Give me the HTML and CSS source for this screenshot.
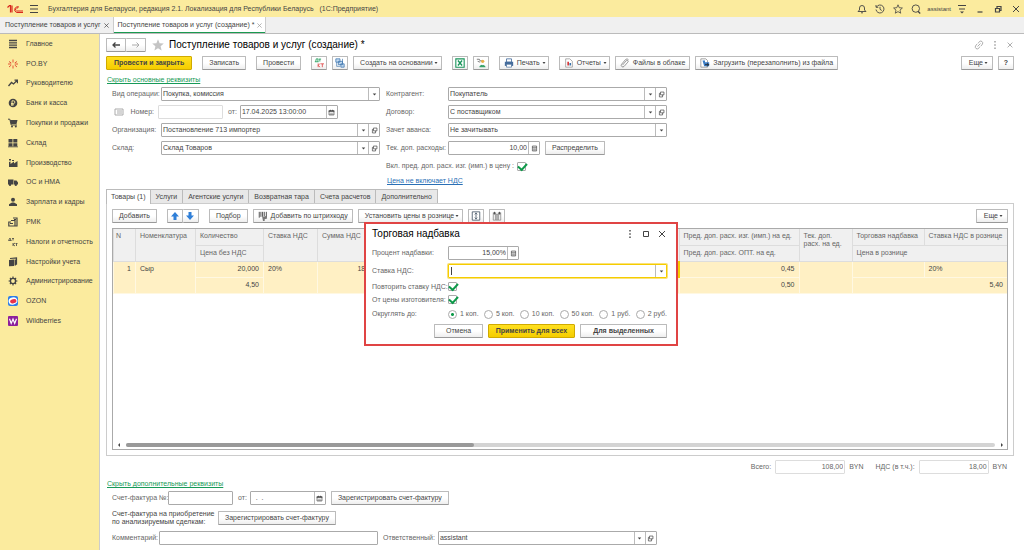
FILE: index.html
```html
<!DOCTYPE html>
<html lang="ru">
<head>
    <meta charset="UTF-8">
    <meta name="viewport" content="width=device-width, initial-scale=1.0">
    <title>Поступление товаров и услуг (создание)</title>
    <link rel="stylesheet" href="styles.css">
</head>
<body>
    <!-- Shared icons -->
    <svg class="sprite" aria-hidden="true">
        <symbol id="i-down" viewBox="0 0 10 10"><path d="M2.5 3.5h5L5 6.5z" fill="currentColor"/></symbol>
        <symbol id="i-open" viewBox="0 0 10 10"><path d="M3.5 1.500h5v4h-5zM3.500 3.500h-1.500v5h4.500v-3" fill="none" stroke="currentColor"/></symbol>
        <symbol id="i-cal" viewBox="0 0 10 10"><path d="M1.500 2.500h7v6h-7z" fill="none" stroke="currentColor"/><path d="M1 2h8v2H1zM3 1h1v2H3zM6 1h1v2H6z" fill="currentColor"/><path d="M3 6h4M3 7.500h4" stroke="currentColor" stroke-width=".6"/></symbol>
        <symbol id="i-calc" viewBox="0 0 10 10"><path d="M2 1.500h6v7H2z" fill="none" stroke="currentColor"/><path d="M2 3.500h6M3 5.500h4M3 7h4" stroke="currentColor" stroke-width=".8"/></symbol>
        <symbol id="i-dots" viewBox="0 0 10 10"><path d="M4.300 1h1.400v1.600H4.300zM4.300 4.200h1.400v1.600H4.300zM4.300 7.400h1.400V9H4.300z" fill="currentColor"/></symbol>
        <symbol id="i-close" viewBox="0 0 10 10"><path d="M2 2l6 6M8 2L2 8" stroke="currentColor" stroke-width="1"/></symbol>
    </svg>

    <header class="titlebar">
        <svg class="logo" viewBox="0 0 32 20" aria-label="1C"><path d="M1 7l4-4h2v14M10 17V3" fill="none" stroke="#d9271c" stroke-width="2.400"/><path d="M24 6a6 6 0 1 0-5 11h13M22 8a3 3 0 1 0-3 6h13" fill="none" stroke="#d9271c" stroke-width="2"/></svg>
        <button class="icon-btn" aria-label="Меню"><svg viewBox="0 0 10 10"><path d="M1 1.500h8M1 5h8M1 8.500h8" stroke="currentColor"/></svg></button>
        <span class="app-name">Бухгалтерия для Беларуси, редакция 2.1. Локализация для Республики Беларусь &nbsp; (1С:Предприятие)</span>
        <div class="title-tools">
            <button class="icon-btn" aria-label="Уведомления"><svg viewBox="0 0 10 10"><path d="M1 7.500h8L7.500 6V4a2.500 2.500 0 0 0-5 0v2zM4 8.800h2" fill="none" stroke="currentColor" stroke-width=".9"/></svg></button>
            <button class="icon-btn" aria-label="История"><svg viewBox="0 0 10 10"><path d="M1.500 3A4 4 0 1 1 1 5.500M1 1v2.300h2.300M5 2.800V5.300l1.800 1.200" fill="none" stroke="currentColor" stroke-width=".9"/></svg></button>
            <button class="icon-btn" aria-label="Избранное"><svg viewBox="0 0 10 10"><path d="M5 .8l1.200 2.900 3.200.3-2.400 2.100.7 3.100L5 7.600 2.300 9.200 3 6.100.6 4l3.200-.3z" fill="none" stroke="currentColor" stroke-width=".8"/></svg></button>
            <button class="icon-btn" aria-label="Поиск"><svg viewBox="0 0 10 10"><circle cx="4.800" cy="4.600" r="3.700" fill="none" stroke="currentColor" stroke-width=".9"/><path d="M7 7.300l2.200 2.200" stroke="currentColor" stroke-width="1.300"/></svg></button>
            <span class="user">assistant</span>
            <button class="icon-btn" aria-label="Настройки"><svg viewBox="0 0 10 10"><path d="M1 1.500h8M2 5h6" stroke="currentColor"/><path d="M3 7.500h4l-2 2z" fill="currentColor"/></svg></button>
            <button class="icon-btn win" aria-label="Свернуть"><svg viewBox="0 0 10 10"><path d="M2.500 8h5" stroke="currentColor" stroke-width="1.200"/></svg></button>
            <button class="icon-btn win" aria-label="Восстановить"><svg viewBox="0 0 10 10"><path d="M4 4V2.500h4v4H6.500M2.500 4.500h4v3.500h-4z" fill="none" stroke="currentColor" stroke-width="1.200"/></svg></button>
            <button class="icon-btn win" aria-label="Закрыть"><svg><use href="#i-close"/></svg></button>
        </div>
    </header>

    <nav class="tabbar">
        <div class="page-tab"><a href="#">Поступление товаров и услуг</a><button class="tab-close" aria-label="Закрыть вкладку"><svg><use href="#i-close"/></svg></button></div>
        <div class="page-tab active"><a href="#">Поступление товаров и услуг (создание) *</a><button class="tab-close" aria-label="Закрыть вкладку"><svg><use href="#i-close"/></svg></button></div>
    </nav>

    <div class="layout">
        <nav class="sidebar">
            <div class="sections">
                <a href="#"><svg viewBox="0 0 10 10"><path d="M1 1.500h8M1 3.800h8M1 6.200h8M1 8.500h8" stroke="currentColor" stroke-width="1.300"/></svg>Главное</a>
                <a href="#"><svg viewBox="0 0 10 10" class="red"><path d="M5 .5v3M5 6.500v3M1 2.500l2.300 1.500M9 2.500L6.700 4M1 8l2.300-2M9 8L6.700 6M0 5h3M7 5h3" stroke="currentColor" stroke-width=".9"/></svg>PO.BY</a>
                <a href="#"><svg viewBox="0 0 10 10"><path d="M.5 8l3-3.500 2 1.500L9 2.500M6.500 2.200h3v3" fill="none" stroke="currentColor" stroke-width="1.300"/></svg>Руководителю</a>
                <a href="#"><svg viewBox="0 0 10 10"><circle cx="5" cy="5" r="4.300" fill="currentColor"/><path d="M4 8V2.800h1.500a1.300 1.300 0 0 1 0 2.700H3M3 6.800h3" fill="none" stroke="#fbeb9e" stroke-width=".9"/></svg>Банк и касса</a>
                <a href="#"><svg viewBox="0 0 10 10"><path d="M0 1.200h1.800L3.200 7H9" fill="none" stroke="currentColor"/><path d="M2 2h7.500L8.500 6H3z" fill="currentColor"/><circle cx="4" cy="8.500" r="1" fill="currentColor"/><circle cx="7.800" cy="8.500" r="1" fill="currentColor"/></svg>Покупки и продажи</a>
                <a href="#"><svg viewBox="0 0 10 10"><path d="M.5 1h4v3.400h-4zM5.300 1h4v3.400h-4zM.5 5.200h4v3h-4zM5.300 5.200h4v3h-4zM0 8.500h10v.8H0z" fill="currentColor"/></svg>Склад</a>
                <a href="#"><svg viewBox="0 0 10 10"><path d="M1 9V4l1.500-.5V6L6 3.500v2L9.500 3v6zM1 1h2v1.500H1zM4 2h2v1H4z" fill="currentColor"/></svg>Производство</a>
                <a href="#"><svg viewBox="0 0 10 10"><path d="M0 2.500h5.500v5H0zM6 3.500h2.500L10 5.500v2H6z" fill="currentColor"/><circle cx="2" cy="7.800" r="1.200" fill="currentColor"/><circle cx="7.800" cy="7.800" r="1.200" fill="currentColor"/></svg>ОС и НМА</a>
                <a href="#"><svg viewBox="0 0 10 10"><circle cx="5" cy="2.700" r="2" fill="currentColor"/><path d="M1 9V7.200L4 5.500h2l3 1.700V9z" fill="currentColor"/></svg>Зарплата и кадры</a>
                <a href="#"><svg viewBox="0 0 10 10"><path d="M3 3.500h4v5.500H.8V5H3M5 1h4v8H7M6 2.500h2M2 6.500h3" fill="none" stroke="currentColor" stroke-width="1.200"/></svg>РМК</a>
                <a href="#"><svg viewBox="0 0 10 10"><path d="M.5 3.500L2 1l1 2.500M.5 3.500h3M4 1.500h2M5 1.500v2M5 6v3M5 7.500L7 6M5 7.500L7 9M7.500 6.500h2M8.500 6.500V9" fill="none" stroke="currentColor" stroke-width=".8"/></svg>Налоги и отчетность</a>
                <a href="#"><svg viewBox="0 0 10 10"><path d="M1 3l5-.5v6.500L1 9.300z" fill="currentColor"/><path d="M2 1.500l6.500-.7v7" fill="none" stroke="currentColor" stroke-width="1.200"/><path d="M6.500 2.500h1.500v6H6.500z" fill="currentColor"/></svg>Настройки учета</a>
                <a href="#"><svg viewBox="0 0 10 10"><circle cx="5" cy="5" r="2.600" fill="none" stroke="currentColor" stroke-width="1.400"/><path d="M5 .6v1.700M5 7.700v1.700M.6 5h1.700M7.700 5h1.700M1.900 1.900L3 3M7 7l1.100 1.100M8.100 1.900L7 3M3 7L1.900 8.100" stroke="currentColor" stroke-width="1.200"/></svg>Администрирование</a>
                <a href="#"><svg viewBox="0 0 10 10"><rect width="10" height="10" rx="2" fill="#2b7de9"/><ellipse cx="5" cy="5" rx="4.400" ry="3.500" fill="#fff" transform="rotate(-15 5 5)"/><ellipse cx="5.200" cy="5.300" rx="3.200" ry="2" fill="#e8324a" transform="rotate(-15 5 5)"/></svg>OZON</a>
                <a href="#"><svg viewBox="0 0 10 10"><rect width="10" height="10" rx="1" fill="#8d1f9c"/><path d="M1.500 2.800l1.700 4.600L5 3l1.700 4.400L8.500 2.800" fill="none" stroke="#fff" stroke-width="1.200"/></svg>Wildberries</a>
            </div>
        </nav>

        <main class="content">
            <div class="doc-head">
                <div class="btn-pair">
                    <button class="btn" aria-label="Назад"><svg viewBox="0 0 10 10"><path d="M9 5H2M4.500 2.500L2 5l2.500 2.500" fill="none" stroke="currentColor" stroke-width="1.300"/></svg></button>
                    <button class="btn pale" aria-label="Вперед"><svg viewBox="0 0 10 10"><path d="M1 5h7M5.500 2.500L8 5 5.500 7.500" fill="none" stroke="currentColor"/></svg></button>
                </div>
                <svg class="star" viewBox="0 0 12 12"><path d="M6 .3l1.600 4 4.200.3-3.200 2.700 1 4.200L6 9.200l-3.600 2.300 1-4.200L.2 4.600l4.200-.3z" fill="#c4c4c4"/></svg>
                <h1>Поступление товаров и услуг (создание) *</h1>
                <div class="doc-tools">
                    <button class="icon-btn" aria-label="Ссылка"><svg viewBox="0 0 10 10"><path d="M4 3.500l1.500-2a2 2 0 0 1 3 2.500L7 6M6 6.500l-1.500 2a2 2 0 0 1-3-2.500L3 4M3.500 6.500l3-3" fill="none" stroke="currentColor" stroke-width=".8"/></svg></button>
                    <button class="icon-btn" aria-label="Еще"><svg><use href="#i-dots"/></svg></button>
                    <button class="icon-btn small" aria-label="Закрыть"><svg><use href="#i-close"/></svg></button>
                </div>
            </div>

            <div class="toolbar">
                <button class="btn primary wide">Провести и закрыть</button>
                <button class="btn">Записать</button>
                <button class="btn">Провести</button>
                <div class="group">
                    <button class="btn sq" aria-label="Движения документа"><svg viewBox="0 0 12 12"><path d="M1 4.500h4.500M2 4.500L2.700 1h2v3.500M5.500 1.300h3M7 1.300v3" fill="none" stroke="#1d9a58"/><path d="M5 6.500v4.500M5 8.800l2.300-2.300M5 8.800L7.300 11M8 7h4M10 7v4" fill="none" stroke="#e04848"/></svg></button>
                    <button class="btn sq" aria-label="Структура подчиненности"><svg viewBox="0 0 12 12"><path d="M1 1h5v4H1zM4 4h5v4H4zM7 7h4v4H7z" fill="#c4dcf2" stroke="#3b74ad" stroke-width=".9"/><path d="M2 5v5h4M9 1v5" fill="none" stroke="#3b74ad" stroke-width=".8"/></svg></button>
                    <button class="btn">Создать на основании<svg class="caret"><use href="#i-down"/></svg></button>
                </div>
                <div class="group">
                    <button class="btn sq" aria-label="Excel"><svg viewBox="0 0 12 12"><path d="M1 1h10v10H1z" fill="#fff" stroke="#18945a" stroke-width="1.300"/><path d="M3.500 3l5 6M8.500 3l-5 6" stroke="#18945a" stroke-width="1.600"/></svg></button>
                    <button class="btn sq" aria-label="Загрузка"><svg viewBox="0 0 12 12"><path d="M1 1.500h3l1 2h3M2 4l3 1" fill="none" stroke="#666"/><circle cx="8" cy="4" r="2" fill="#e8b04a"/><path d="M4 11c0-4 7-4 7.500 0z" fill="#38a169"/><path d="M7 7l1 2 1-2z" fill="#fff"/></svg></button>
                </div>
                <button class="btn icon-text"><svg viewBox="0 0 12 12"><path d="M3 1h6v4H3z" fill="#fff" stroke="#456c9c"/><path d="M1 4.500h10v5H1z" fill="#456c9c"/><path d="M3 7.500h6V11H3z" fill="#fff" stroke="#456c9c" stroke-width=".8"/></svg>Печать<svg class="caret"><use href="#i-down"/></svg></button>
                <div class="group">
                    <button class="btn icon-text"><svg viewBox="0 0 12 12"><path d="M2 1h5l3 3v7H2z" fill="#fff" stroke="#888" stroke-width=".8"/><path d="M4 4.500h2V9H4z" fill="#d93a3a"/><path d="M6.500 6h2v3h-2z" fill="#3b74ad"/></svg>Отчеты<svg class="caret"><use href="#i-down"/></svg></button>
                    <button class="btn icon-text"><svg viewBox="0 0 12 12"><path d="M3 8.500l4.500-5.200a1.200 1.200 0 0 1 2 1.600l-4.700 5.300a2 2 0 0 1-3-2.600L6.500 2a2.500 2.500 0 0 1 3.800.2" fill="none" stroke="#777" stroke-width=".9"/></svg>Файлы в облаке</button>
                    <button class="btn icon-text"><svg viewBox="0 0 12 12"><path d="M1 1h6l2 2v8H1z" fill="#fff" stroke="#777" stroke-width=".8"/><path d="M3 3h3v2h5v5H5z" fill="#3b7cc4"/><path d="M6 8h4M8.500 6.500L10.500 8 8.500 10" fill="none" stroke="#222"/></svg>Загрузить (перезаполнить) из файла</button>
                </div>
                <div class="group right">
                    <button class="btn wide">Еще<svg class="caret"><use href="#i-down"/></svg></button>
                    <button class="btn sq"><b>?</b></button>
                </div>
            </div>

            <a href="#" class="link green">Скрыть основные реквизиты</a>

            <form class="details">
                <div class="col">
                    <div class="row">
                        <label for="operation">Вид операции:</label>
                        <div class="field grow"><select id="operation"><option>Покупка, комиссия</option></select><span class="cell"><svg><use href="#i-down"/></svg></span></div>
                    </div>
                    <div class="row">
                        <label for="number" class="with-icon"><svg viewBox="0 0 10 10"><path d="M1 2h8v6H1zM3 4h5M3 6h5" fill="none" stroke="#aaa"/></svg>Номер:</label>
                        <div class="field number disabled"><input type="text" id="number"></div>
                        <label for="date" class="inline">от:</label>
                        <div class="field date"><input type="text" id="date" value="17.04.2025 13:00:00"><button type="button" class="cell" aria-label="Календарь"><svg><use href="#i-cal"/></svg></button></div>
                    </div>
                    <div class="row">
                        <label for="org">Организация:</label>
                        <div class="field grow"><select id="org"><option>Постановление 713 импортер</option></select><span class="cell"><svg><use href="#i-down"/></svg></span><button type="button" class="cell" aria-label="Открыть"><svg><use href="#i-open"/></svg></button></div>
                    </div>
                    <div class="row">
                        <label for="store">Склад:</label>
                        <div class="field grow"><select id="store"><option>Склад Товаров</option></select><span class="cell"><svg><use href="#i-down"/></svg></span><button type="button" class="cell" aria-label="Открыть"><svg><use href="#i-open"/></svg></button></div>
                    </div>
                </div>
                <div class="col second">
                    <div class="row">
                        <label for="partner">Контрагент:</label>
                        <div class="field grow"><select id="partner"><option>Покупатель</option></select><span class="cell"><svg><use href="#i-down"/></svg></span><button type="button" class="cell" aria-label="Открыть"><svg><use href="#i-open"/></svg></button></div>
                    </div>
                    <div class="row">
                        <label for="contract">Договор:</label>
                        <div class="field grow"><select id="contract"><option>С поставщиком</option></select><span class="cell"><svg><use href="#i-down"/></svg></span><button type="button" class="cell" aria-label="Открыть"><svg><use href="#i-open"/></svg></button></div>
                    </div>
                    <div class="row">
                        <label for="advance">Зачет аванса:</label>
                        <div class="field grow"><select id="advance"><option>Не зачитывать</option></select><span class="cell"><svg><use href="#i-down"/></svg></span></div>
                    </div>
                    <div class="row">
                        <label for="costs">Тек. доп. расходы:</label>
                        <div class="field costs"><input type="text" id="costs" class="num" value="10,00"><button type="button" class="cell" aria-label="Калькулятор"><svg><use href="#i-calc"/></svg></button></div>
                        <button type="button" class="btn">Распределить</button>
                    </div>
                    <div class="row">
                        <label for="include" class="inline first">Вкл. пред. доп. расх. изг. (имп.) в цену :</label>
                        <input type="checkbox" id="include" checked>
                    </div>
                    <a href="#" class="link blue">Цена не включает НДС</a>
                </div>
            </form>

            <div class="tabs">
                <button class="active">Товары (1)</button>
                <button>Услуги</button>
                <button>Агентские услуги</button>
                <button>Возвратная тара</button>
                <button>Счета расчетов</button>
                <button>Дополнительно</button>
            </div>

            <section class="panel">
                <div class="toolbar inner">
                    <button class="btn">Добавить</button>
                    <div class="btn-pair">
                        <button class="btn sq" aria-label="Вверх"><svg viewBox="0 0 10 10"><path d="M5 1l4 4.500H6.500V9h-3V5.500H1z" fill="#2f7fd8"/></svg></button>
                        <button class="btn sq" aria-label="Вниз"><svg viewBox="0 0 10 10"><path d="M5 9L1 4.500h2.500V1h3v3.500H9z" fill="#2f7fd8"/></svg></button>
                    </div>
                    <div class="group">
                        <button class="btn">Подбор</button>
                        <button class="btn icon-text"><svg viewBox="0 0 12 12"><path d="M1.500 1v7M3.500 1v6M5.500 1v6M7.500 1v5M10 1v7" stroke="#555" stroke-width="1.200"/><path d="M5 7l5-1 1 3-3 1v2H6z" fill="#777"/></svg>Добавить по штрихкоду</button>
                        <button class="btn">Установить цены в рознице<svg class="caret"><use href="#i-down"/></svg></button>
                        <button class="btn sq" aria-label="Развернуть"><svg viewBox="0 0 12 12"><path d="M1.500 1h9v10h-9z" fill="#fff" stroke="#456" /><path d="M6 2v8M4.500 4L6 2.500 7.500 4M4.500 8L6 9.500 7.500 8" fill="none" stroke="#456"/></svg></button>
                        <button class="btn sq" aria-label="Колонки"><svg viewBox="0 0 12 12"><path d="M1.500 3.500h3V11h-3zM7.500 3.500h3V11h-3zM5 4h2v7H5z" fill="#eee" stroke="#777" stroke-width=".8"/><path d="M1 2.500h4M7 2.500h4M3 1v3M9 1v3" stroke="#555" stroke-width="1.200"/></svg></button>
                    </div>
                    <button class="btn wide right">Еще<svg class="caret"><use href="#i-down"/></svg></button>
                </div>

                <div class="grid-box">
                    <table>
                        <colgroup>
                            <col class="c-n"><col class="c-name"><col class="c-qty"><col class="c-vat"><col class="c-sum"><col>
                            <col class="c-prev"><col class="c-cur"><col class="c-markup"><col class="c-retail">
                        </colgroup>
                        <thead>
                            <tr>
                                <th rowspan="2">N</th>
                                <th rowspan="2">Номенклатура</th>
                                <th>Количество</th>
                                <th rowspan="2">Ставка НДС</th>
                                <th rowspan="2">Сумма НДС</th>
                                <th rowspan="2"></th>
                                <th>Пред. доп. расх. изг. (имп.) на ед.</th>
                                <th rowspan="2">Тек. доп. расх. на ед.</th>
                                <th>Торговая надбавка</th>
                                <th>Ставка НДС в рознице</th>
                            </tr>
                            <tr>
                                <th>Цена без НДС</th>
                                <th>Пред. доп. расх. ОПТ. на ед.</th>
                                <th colspan="2">Цена в рознице</th>
                            </tr>
                        </thead>
                        <tbody>
                            <tr>
                                <td rowspan="2" class="num">1</td>
                                <td rowspan="2">Сыр</td>
                                <td class="num">20,000</td>
                                <td rowspan="2">20%</td>
                                <td rowspan="2" class="num">18,00</td>
                                <td class="current"></td>
                                <td class="num">0,45</td>
                                <td rowspan="2"></td>
                                <td></td>
                                <td>20%</td>
                            </tr>
                            <tr>
                                <td class="num">4,50</td>
                                <td></td>
                                <td class="num">0,50</td>
                                <td colspan="2" class="num">5,40</td>
                            </tr>
                        </tbody>
                    </table>
                    <div class="scroll">
                        <svg viewBox="0 0 6 6"><path d="M4 1v4L2 3z" fill="#444"/></svg>
                        <div class="track"><div class="thumb"></div></div>
                        <svg viewBox="0 0 6 6"><path d="M2 1v4l2-2z" fill="#444"/></svg>
                    </div>
                </div>

                <div class="dialog" role="dialog" aria-labelledby="dialogTitle">
                    <div class="dialog-head">
                        <h2 id="dialogTitle">Торговая надбавка</h2>
                        <button class="icon-btn" aria-label="Еще"><svg><use href="#i-dots"/></svg></button>
                        <button class="icon-btn" aria-label="Развернуть"><svg viewBox="0 0 10 10"><path d="M2.500 2.500h5v5h-5z" fill="none" stroke="currentColor"/></svg></button>
                        <button class="icon-btn" aria-label="Закрыть"><svg><use href="#i-close"/></svg></button>
                    </div>
                    <div class="row">
                        <label for="percent">Процент надбавки:</label>
                        <div class="field percent"><input type="text" id="percent" class="num" value="15,00%"><button class="cell" aria-label="Калькулятор"><svg><use href="#i-calc"/></svg></button></div>
                    </div>
                    <div class="row">
                        <label for="vat">Ставка НДС:</label>
                        <div class="field grow focused"><input type="text" id="vat"><button class="cell" aria-label="Выбрать"><svg><use href="#i-down"/></svg></button></div>
                    </div>
                    <div class="row short">
                        <label for="repeat">Повторить ставку НДС:</label>
                        <input type="checkbox" id="repeat" checked>
                    </div>
                    <div class="row short">
                        <label for="maker">От цены изготовителя:</label>
                        <input type="checkbox" id="maker" checked>
                    </div>
                    <div class="row rounding">
                        <span class="label">Округлять до:</span>
                        <div class="radios">
                            <label><input type="radio" name="round" checked>1 коп.</label>
                            <label><input type="radio" name="round">5 коп.</label>
                            <label><input type="radio" name="round">10 коп.</label>
                            <label><input type="radio" name="round">50 коп.</label>
                            <label><input type="radio" name="round">1 руб.</label>
                            <label><input type="radio" name="round">2 руб.</label>
                        </div>
                    </div>
                    <div class="dialog-actions">
                        <button class="btn">Отмена</button>
                        <button class="btn primary">Применить для всех</button>
                        <button class="btn bold">Для выделенных</button>
                    </div>
                </div>
            </section>

            <div class="totals">
                <label for="total">Всего:</label>
                <div class="field disabled"><input type="text" id="total" class="num" value="108,00"></div>
                <span>BYN</span>
                <label for="totalVat" class="next">НДС (в т.ч.):</label>
                <div class="field disabled"><input type="text" id="totalVat" class="num" value="18,00"></div>
                <span>BYN</span>
            </div>

            <a href="#" class="link green">Скрыть дополнительные реквизиты</a>

            <form class="extra">
                <div class="row">
                    <label for="invoice">Счет-фактура №:</label>
                    <div class="field number"><input type="text" id="invoice"></div>
                    <label for="invoiceDate" class="inline">от:</label>
                    <div class="field invoice-date"><input type="text" id="invoiceDate" value="  .  ."><button type="button" class="cell" aria-label="Календарь"><svg><use href="#i-cal"/></svg></button></div>
                    <button type="button" class="btn">Зарегистрировать счет-фактуру</button>
                </div>
                <div class="row">
                    <span class="label two-line">Счет-фактура на приобретение по анализируемым сделкам:</span>
                    <button type="button" class="btn">Зарегистрировать счет-фактуру</button>
                </div>
                <div class="row">
                    <label for="comment" class="comment">Комментарий:</label>
                    <div class="field long"><input type="text" id="comment"></div>
                    <label for="owner" class="inline">Ответственный:</label>
                    <div class="field long"><select id="owner"><option>assistant</option></select><span class="cell"><svg><use href="#i-down"/></svg></span><button type="button" class="cell" aria-label="Открыть"><svg><use href="#i-open"/></svg></button></div>
                </div>
            </form>
        </main>
    </div>
</body>
</html>
```

FILE: styles.css
```css
* {
    box-sizing: border-box;
}
body {
    margin: 0;
    min-height: 100vh;
    display: flex;
    flex-direction: column;
    font-family: "Liberation Sans", Arial, sans-serif;
    font-size: 7px;
    line-height: 8px;
    color: #444;
    background: #fff;
}
button, input, select {
    font: inherit;
    color: inherit;
    margin: 0;
}
button {
    cursor: pointer;
}
svg {
    display: block;
    width: 10px;
    height: 10px;
    flex: none;
}
.sprite {
    position: absolute;
    width: 0;
    height: 0;
}
.icon-btn {
    border: 0;
    padding: 0;
    background: none;
}

/* Title bar */
.titlebar {
    display: flex;
    align-items: center;
    height: 17px;
    padding: 0 3px 0 7px;
    background: #fbeb9e;
}
.logo {
    width: 16px;
    height: 10px;
    margin-right: 6px;
}
.titlebar .app-name {
    margin-left: 9px;
}
.title-tools {
    display: flex;
    align-items: center;
    gap: 8px;
    margin-left: auto;
}
.title-tools .user {
    font-size: 6px;
    margin: 0 -2px;
}

/* Open pages */
.tabbar {
    display: flex;
    height: 17px;
    background: #f0f0f0;
    border-bottom: 1px solid #bbb;
}
.page-tab {
    display: flex;
    align-items: center;
    gap: 2px;
    padding: 0 3px 0 5px;
    border-right: 1px solid #ccc;
}
.page-tab a {
    color: inherit;
    text-decoration: none;
}
.page-tab.active {
    background: #fff;
    box-shadow: inset 0 -1px #1a9a50;
    padding: 0 2px 0 4px;
}
.tab-close {
    border: 0;
    padding: 0;
    background: none;
}
.tab-close svg {
    width: 7px;
    height: 7px;
}
.active .tab-close {
    color: #999;
}

.layout {
    display: flex;
    flex: 1;
}

/* Sections */
.sidebar {
    width: 100px;
    flex: none;
    background: #fbeb9e;
    border-right: 1px solid #ccc;
}
.sections {
    display: grid;
    grid-auto-rows: 1fr;
    min-height: 54vh;
}
.sidebar a {
    display: flex;
    align-items: center;
    gap: 8px;
    padding-left: 8px;
    color: #444;
    text-decoration: none;
}
.sidebar .red {
    color: #e0452c;
}

/* Document */
.content {
    flex: 1;
    min-width: 0;
    display: flex;
    flex-direction: column;
    padding: 4px 10px 5px 6px;
}
.doc-head {
    display: flex;
    align-items: center;
    height: 14px;
}
.doc-head h1, .dialog h2 {
    font-size: 10px;
    line-height: 12px;
    font-weight: normal;
    color: #000;
    margin: 0;
}
.star {
    width: 12px;
    height: 12px;
    margin: 0 5px 0 6px;
}
.doc-tools {
    display: flex;
    align-items: center;
    gap: 6px;
    margin-left: auto;
    color: #999;
}
.small svg {
    width: 8px;
    height: 8px;
}
.btn {
    display: flex;
    align-items: center;
    justify-content: center;
    gap: 3px;
    height: 14px;
    padding: 0 6px;
    border: 1px solid #bbb;
    border-bottom-color: #999;
    border-radius: 1px;
    background: linear-gradient(#fff 50%, #eee);
    white-space: nowrap;
}
.btn.wide {
    padding: 0 7px;
}
.btn.sq {
    width: 16px;
    padding: 0;
}
.btn.primary {
    font-weight: bold;
    background: linear-gradient(#ffe01f, #f5cd00);
    border-color: #d0aa00;
}
.btn.bold {
    font-weight: bold;
}
.btn.icon-text {
    padding: 0 4px;
}
.btn .caret {
    width: 6px;
    height: 6px;
    margin: 0 -4px 0 -3px;
}
.btn.icon-text .caret {
    margin: 0 -3px 0 -2px;
}
.btn.pale {
    color: #aaa;
}
.btn-pair {
    display: flex;
}
.btn-pair .btn + .btn {
    border-left: 0;
}
.doc-head .btn-pair .btn {
    width: 20px;
    padding: 0;
}
.toolbar {
    display: flex;
    gap: 10px;
    margin-top: 4px;
}
.group {
    display: flex;
    gap: 5px;
}
.right {
    margin-left: auto;
}
.link {
    align-self: flex-start;
    text-decoration: underline;
}
.green {
    color: #179a58;
}
.blue {
    color: #2a6fb5;
    margin-left: 1px;
}
.content > .green {
    margin: 6px 0 3px 1px;
}

/* Form fields */
.details {
    display: flex;
    gap: 6px;
    padding-left: 6px;
}
.col {
    display: flex;
    flex-direction: column;
    gap: 4px;
    width: 268px;
}
.col.second {
    width: 281px;
}
.row {
    display: flex;
    align-items: center;
    min-height: 14px;
}
.row label {
    width: 49px;
    flex: none;
    color: #666;
    white-space: nowrap;
}
.second .row label {
    width: 62px;
}
.row .inline, .second .row .inline {
    width: auto;
    margin: 0 3px 0 5px;
}
.second .row .first {
    margin-left: 0;
}
.row .with-icon {
    display: flex;
    align-items: center;
    justify-content: space-between;
    padding: 0 4px 0 2px;
    width: 46px;
}
.field {
    display: flex;
    height: 14px;
    border: 1px solid #aaa;
    border-radius: 1px;
    background: #fff;
}
.field.disabled {
    border-color: #ddd;
}
.field input, .field select {
    flex: 1;
    min-width: 0;
    width: 100%;
    border: 0;
    padding: 0 1px;
    background: none;
    outline: none;
    appearance: none;
}
.cell {
    display: flex;
    align-items: center;
    justify-content: center;
    width: 11px;
    flex: none;
    padding: 0;
    border: 0;
    border-left: 1px solid #bbb;
    background: none;
}
.cell svg {
    width: 7px;
    height: 7px;
}
.num, .field .num {
    text-align: right;
}
.grow {
    flex: 1;
}
.number {
    width: 65px;
}
.date {
    width: 98px;
}
.costs {
    width: 92px;
    margin-right: 5px;
}
input[type="checkbox"] {
    appearance: none;
    width: 9px;
    height: 9px;
    border: 1px solid #aaa;
    border-radius: 1px;
    background: #fff;
    display: grid;
    place-items: center;
}
input[type="checkbox"]:checked::before {
    content: "";
    width: 7px;
    height: 4px;
    margin-bottom: 3px;
    border: solid #0e9a4a;
    border-width: 0 0 2px 2px;
    transform: rotate(-48deg);
}
input[type="radio"] {
    appearance: none;
    width: 9px;
    height: 9px;
    border: 1px solid #aaa;
    border-radius: 50%;
    background: #fff;
}
input[type="radio"]:checked {
    background: radial-gradient(circle, #0e9a4a 1px, #fff 2px);
}

/* Tabs with the goods table */
.tabs {
    display: flex;
    margin-top: 4px;
}
.tabs button {
    height: 14px;
    padding: 0 5px;
    border: 1px solid #bbb;
    border-width: 1px 1px 0 0;
    background: #e8e8e8;
    white-space: nowrap;
}
.tabs .active {
    position: relative;
    z-index: 1;
    height: 15px;
    margin-bottom: -1px;
    padding: 0 4px;
    border-left-width: 1px;
    background: #fff;
}
.panel {
    position: relative;
    flex: 1;
    display: flex;
    flex-direction: column;
    gap: 5px;
    padding: 5px;
    border: 1px solid #ccc;
}
.toolbar.inner {
    margin-top: 0;
}
.grid-box {
    flex: 1;
    display: flex;
    flex-direction: column;
    justify-content: space-between;
    border: 1px solid #aaa;
}
table {
    width: 100%;
    table-layout: fixed;
    border-collapse: collapse;
}
th, td {
    height: 16px;
    padding: 3px 4px;
    font-weight: normal;
    text-align: left;
    vertical-align: top;
}
th {
    color: #666;
    background: #f0f0f0;
    border: 1px solid #ddd;
    border-width: 0 0 1px 1px;
}
td {
    background: #fff0c4;
    border: 1px solid #fff8e2;
    border-width: 0 0 1px 1px;
}
th:first-child, td:first-child {
    padding-left: 2px;
}
tr:nth-child(2) th:first-child {
    padding-left: 4px;
}
td.current {
    border-right: 2px solid #f5cd00;
}
.c-n {
    width: 22px;
}
.c-name {
    width: 60px;
}
.c-qty {
    width: 68px;
}
.c-vat {
    width: 54px;
}
.c-sum {
    width: 62px;
}
.c-prev {
    width: 120px;
}
.c-cur {
    width: 53px;
}
.c-markup {
    width: 72px;
}
.c-retail {
    width: 83px;
}
.scroll {
    display: flex;
    align-items: center;
    gap: 4px;
    padding: 0 2px 1px 3px;
}
.scroll svg {
    width: 6px;
    height: 6px;
}
.track {
    flex: 1;
    height: 4px;
    border-radius: 2px;
    background: #d4d4d4;
}
.thumb {
    width: 40%;
    height: 4px;
    border-radius: 2px;
    background: #999;
}

/* Markup dialog */
.dialog {
    position: absolute;
    top: 18px;
    left: 257px;
    width: 314px;
    padding: 3px 9px 6px 6px;
    border: 2px solid #e04444;
    background: #fff;
    display: flex;
    flex-direction: column;
    gap: 4px;
}
.dialog-head {
    display: flex;
    align-items: center;
    gap: 6px;
    height: 14px;
    margin-bottom: 1px;
}
.dialog-head h2 {
    flex: 1;
}
.dialog .row label, .dialog .label {
    width: 76px;
    flex: none;
    color: #666;
}
.dialog .row.short {
    min-height: 9px;
}
.dialog .row.rounding {
    min-height: 12px;
}
.percent {
    width: 71px;
}
.focused {
    position: relative;
    border: 1px solid #f5cd00;
    box-shadow: 0 0 0 1px #fbe27a;
}
/* text cursor */
.focused::before {
    content: "";
    position: absolute;
    left: 2px;
    top: 2px;
    bottom: 2px;
    width: 1px;
    background: #444;
}
.radios {
    flex: 1;
    display: flex;
    justify-content: space-between;
}
.dialog .radios label {
    display: flex;
    align-items: center;
    gap: 3px;
    width: auto;
}
.dialog-actions {
    display: flex;
    justify-content: flex-end;
    gap: 5px;
}
.dialog-actions .btn {
    width: 87px;
}
.dialog-actions .btn:first-child {
    width: 49px;
}

/* Totals and invoice */
.totals {
    display: flex;
    align-items: center;
    justify-content: flex-end;
    gap: 4px;
    margin-top: 4px;
    padding-right: 7px;
    color: #666;
}
.totals .field {
    width: 70px;
}
.totals .next {
    margin-left: 8px;
}
.extra {
    display: flex;
    flex-direction: column;
    gap: 5px;
    padding-left: 6px;
}
.extra .row label:first-child {
    width: 56px;
}
.extra .row .comment:first-child {
    width: 47px;
}
.invoice-date {
    width: 76px;
    margin-right: 5px;
}
.invoice-date input {
    white-space: pre;
}
.two-line {
    width: 106px;
}
.long {
    width: 219px;
}
```
